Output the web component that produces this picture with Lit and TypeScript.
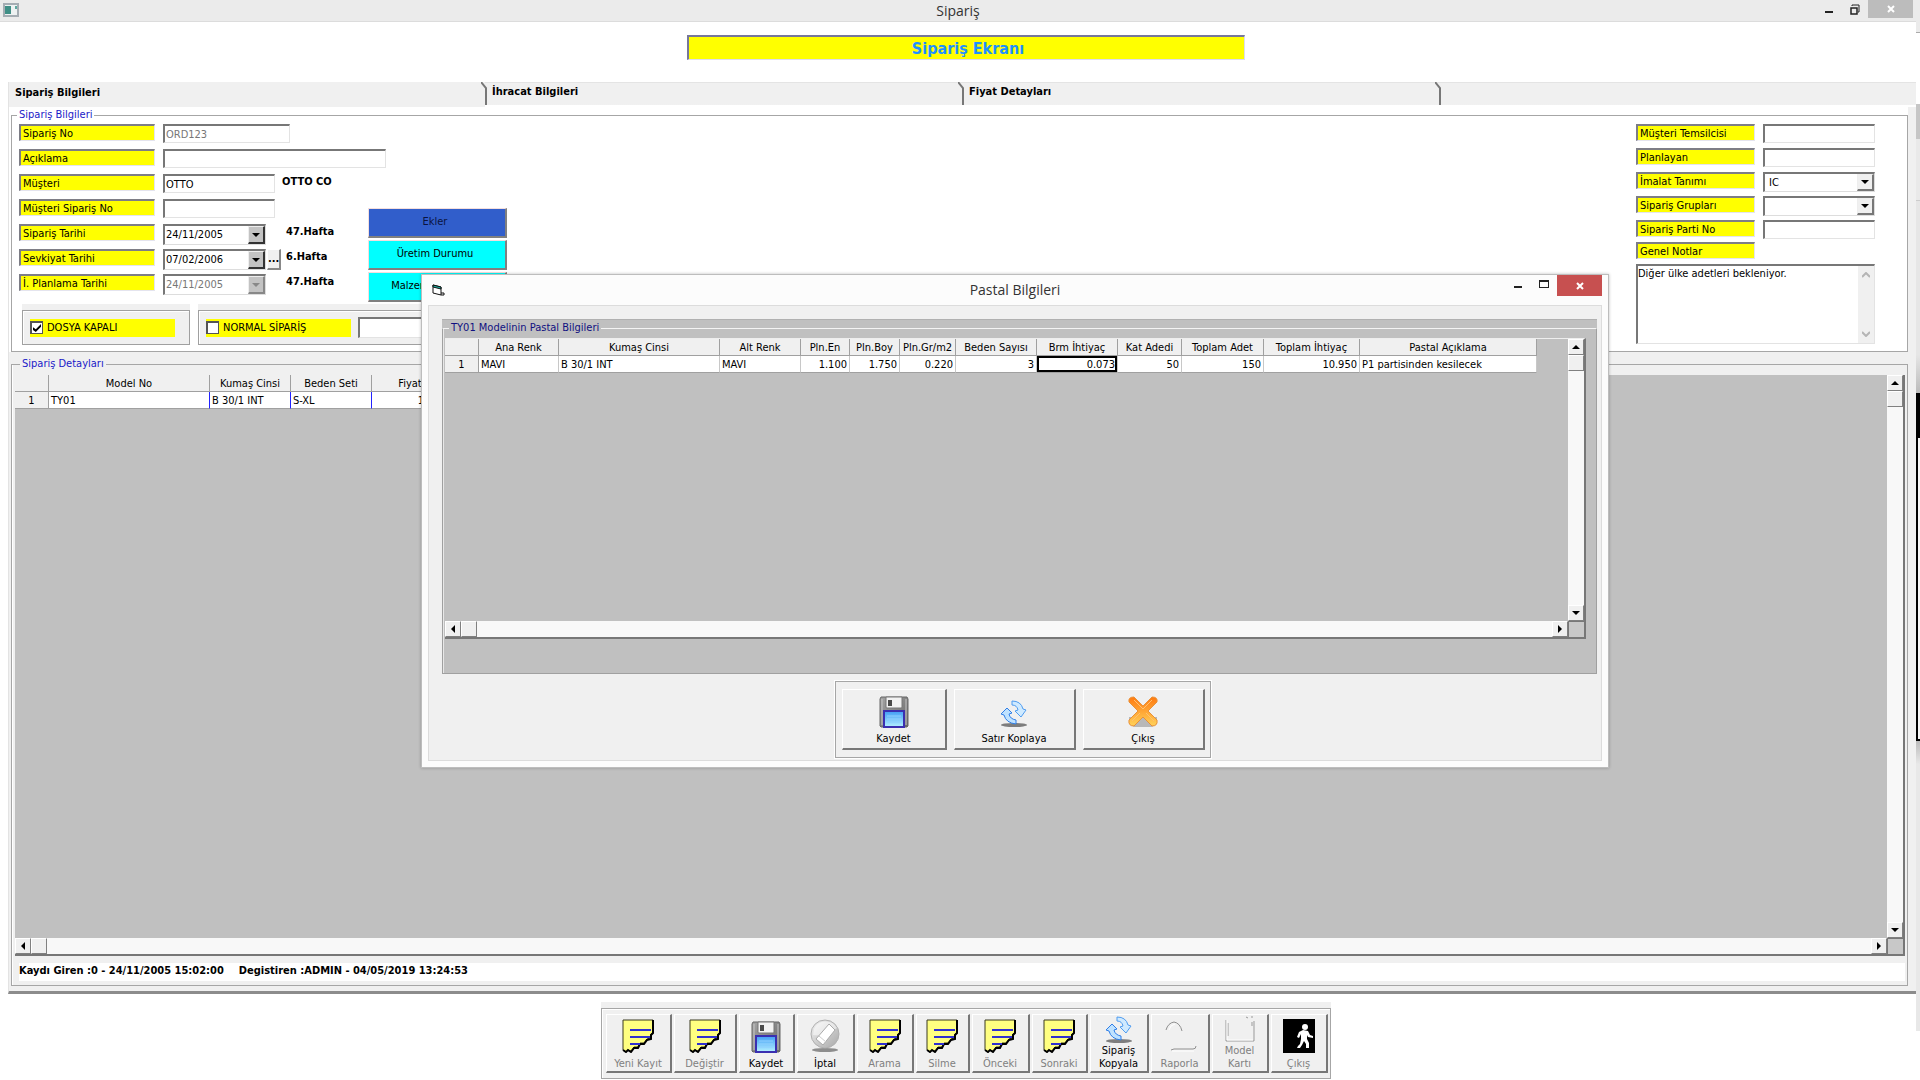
import { LitElement, html, svg, css, nothing } from "lit";
import { customElement } from "lit/decorators.js";
import { classMap } from "lit/directives/class-map.js";

const noteIcon = svg`<svg width="32" height="34" viewBox="0 0 32 34">
  <path d="M1 1H31V14L29 15L28 19L25 20L22 24L18 24L16 28L12 28L9 32L6 31L4 33L1 31Z" fill="#ffff80" stroke="#3a3a20" stroke-width="1"/>
  <path d="M31 1V14L29 16L29 20L25 21L22 25L18 25L16 29L12 29L9 33L6 31L4 33L1 31" fill="none" stroke="#000" stroke-width="2"/>
  <path d="M8 11H29M8 18H28M8 25H18" stroke="#3030d0" stroke-width="2"/></svg>`;

const diskIcon = svg`<svg width="30" height="32" viewBox="0 0 30 32">
  <defs>
    <linearGradient id="dk" x1="0" y1="0" x2="1" y2="1"><stop offset="0" stop-color="#a4a4a4"/><stop offset="1" stop-color="#686868"/></linearGradient>
    <linearGradient id="dl" x1="0" y1="0" x2="0" y2="1"><stop offset="0" stop-color="#3f9cf5"/><stop offset="1" stop-color="#b5f1ff"/></linearGradient>
  </defs>
  <path d="M2 1H28L29 3V30L28 31H2L1 30V3Z" fill="url(#dk)" stroke="#666"/>
  <path d="M3 3V29M27 3V29" stroke="#c5c5c5" stroke-width="1"/>
  <path d="M7 1H23V11Q23 12 22 12H8Q7 12 7 11Z" fill="#f2f2f2" stroke="#777"/>
  <rect x="9" y="4" width="4" height="6" fill="#4a4a4a"/>
  <rect x="5" y="15" width="20" height="16" fill="url(#dl)" stroke="#3a2fb0" stroke-width="2"/>
  <path d="M8 20H22M8 23H22M8 26H22" stroke="#8fd0ff" stroke-width="1"/></svg>`;

const cancelIcon = svg`<svg width="30" height="34" viewBox="0 0 30 34">
  <defs><linearGradient id="cg" x1="0" y1="0" x2="1" y2="1"><stop offset="0" stop-color="#f4f4f4"/><stop offset="1" stop-color="#a8a8a8"/></linearGradient></defs>
  <ellipse cx="15" cy="31" rx="13" ry="2" fill="#8d8d8d"/>
  <circle cx="15" cy="15" r="14" fill="url(#cg)" stroke="#b0b0b0"/>
  <path d="M3 16Q14 18 27 9A13 13 0 0 0 4 10Z" fill="#fff" opacity=".5"/>
  <path d="M19 5L25 11L13 26L6 20Z" fill="#fff" stroke="#aaa"/>
  <path d="M9 17L16 23" stroke="#ccc"/></svg>`;

const copyIcon = svg`<svg width="28" height="28" viewBox="0 0 28 28">
  <ellipse cx="14" cy="25" rx="13" ry="2" fill="#7d7d7d"/>
  <path d="M12 1Q21 1 23 9L26 10L21 17L15 11L18 10Q17 5 12 5Z" fill="#cfeaff" stroke="#4f9cf0"/>
  <path d="M7 8L12 13L9 14Q10 19 16 20V24Q6 23 4 15L1 14Z" fill="#bfe2ff" stroke="#2f7fe8"/></svg>`;

const closeIcon = svg`<svg width="30" height="32" viewBox="0 0 30 32">
  <defs><linearGradient id="xg" x1="0" y1="0" x2="0" y2="1"><stop offset="0" stop-color="#ff7a10"/><stop offset="1" stop-color="#ffd25a"/></linearGradient></defs>
  <path d="M1 21H29V27L24 31H6L1 27Z" fill="#aaa" opacity=".8"/>
  <path d="M6 1L15 10L24 1Q30 1 29 6L20 15L29 24Q30 30 24 30L15 21L6 30Q0 30 1 24L10 15L1 6Q0 1 6 1Z" fill="url(#xg)" stroke="#e8913a"/>
  <path d="M6 4L15 13L24 4M4 25L12 17M26 25L18 17" fill="none" stroke="#ffc070" stroke-width="1"/></svg>`;

const reportIcon = svg`<svg width="34" height="34" viewBox="0 0 34 34" fill="none">
  <path d="M3 11Q5 4 11 3Q17 4 19 12" stroke="#8f8f8f"/><path d="M6 11Q7 6 12 5" stroke="#fff"/>
  <path d="M8 31L11 30H30Q33 30 33 27" stroke="#8f8f8f"/><path d="M9 32H31" stroke="#fff"/></svg>`;

const cardIcon = svg`<svg width="32" height="28" viewBox="0 0 32 28" fill="none">
  <path d="M2 4V25H30V5M4 7V20M28 6V10M22 1L24 2M27 1H29" stroke="#999"/><path d="M3 24H29M3 4V24" stroke="#fff"/></svg>`;

const exitIcon = svg`<svg width="32" height="34" viewBox="0 0 32 34">
  <rect width="32" height="34" fill="#000"/>
  <circle cx="22" cy="8" r="3" fill="#fff"/>
  <path d="M20 11L25 12L27 16L30 17V19L25 18L24 16V20L26 24V29L23 29L23 25L21 22L19 26L17 29L14 29L15 27L17 25L18 20V15L16 19L14 18L16 13Z" fill="#fff"/></svg>`;

const tri = {
  up: svg`<svg width="8" height="4" viewBox="0 0 8 4"><path d="M0 4L4 0L8 4Z"/></svg>`,
  down: svg`<svg width="8" height="4" viewBox="0 0 8 4"><path d="M0 0H8L4 4Z"/></svg>`,
  left: svg`<svg width="4" height="8" viewBox="0 0 4 8"><path d="M4 0V8L0 4Z"/></svg>`,
  right: svg`<svg width="4" height="8" viewBox="0 0 4 8"><path d="M0 0V8L4 4Z"/></svg>`,
};

const tabEdge = html`<svg class="tab-edge" width="7" height="24" viewBox="0 0 7 24"><path d="M0 0L5 6V23" fill="none" stroke="#777" stroke-width="2"/></svg>`;
const minGlyph = html`<svg width="8" height="10" viewBox="0 0 8 10"><path d="M0 8H8" stroke="#222" stroke-width="2"/></svg>`;
const crossGlyph = html`<svg width="8" height="8" viewBox="0 0 8 8"><path d="M1 1L7 7M7 1L1 7" stroke="#fff" stroke-width="2"/></svg>`;

interface GridColumn { title: string; value: string; num?: boolean; active?: boolean }
const planColumns: GridColumn[] = [
  { title: "Ana Renk", value: "MAVI" },
  { title: "Kumaş Cinsi", value: "B 30/1 INT" },
  { title: "Alt Renk", value: "MAVI" },
  { title: "Pln.En", value: "1.100", num: true },
  { title: "Pln.Boy", value: "1.750", num: true },
  { title: "Pln.Gr/m2", value: "0.220", num: true },
  { title: "Beden Sayısı", value: "3", num: true },
  { title: "Brm İhtiyaç", value: "0.073", num: true, active: true },
  { title: "Kat Adedi", value: "50", num: true },
  { title: "Toplam Adet", value: "150", num: true },
  { title: "Toplam İhtiyaç", value: "10.950", num: true },
  { title: "Pastal Açıklama", value: "P1 partisinden kesilecek" },
];
const planWidths = [34, 80, 161, 81, 49, 50, 56, 81, 81, 64, 82, 96, 177];

const orderColumns: GridColumn[] = [
  { title: "Model No", value: "TY01" },
  { title: "Kumaş Cinsi", value: "B 30/1 INT" },
  { title: "Beden Seti", value: "S-XL" },
  { title: "Fiyat", value: "1.000", num: true },
];
const orderWidths = [34, 161, 81, 81, 77];

const tools = [
  { text: "Yeni Kayıt", icon: noteIcon, off: true },
  { text: "Değiştir", icon: noteIcon, off: true },
  { text: "Kaydet", icon: diskIcon },
  { text: "İptal", icon: cancelIcon },
  { text: "Arama", icon: noteIcon, off: true },
  { text: "Silme", icon: noteIcon, off: true },
  { text: "Önceki", icon: noteIcon, off: true },
  { text: "Sonraki", icon: noteIcon, off: true },
  { text: "Sipariş Kopyala", icon: copyIcon },
  { text: "Raporla", icon: reportIcon, off: true },
  { text: "Model Kartı", icon: cardIcon, off: true },
  { text: "Çıkış", icon: exitIcon, off: true },
];

@customElement("app-root")
export class AppRoot extends LitElement {
  static styles = css`
    :host {
      display: block;
      font: 11px/14px "DejaVu Sans Condensed", "Noto Sans", sans-serif;
      color: #000;
    }
    * { box-sizing: border-box; }
    button, input, select, textarea { font: inherit; color: inherit; margin: 0; border-radius: 0; }
    svg { display: block; flex: none; }
    .screen { position: relative; display: flex; min-height: 100vh; background: #fff; }
    .main { flex: 1; min-width: 0; display: flex; flex-direction: column; }

    .titlebar { display: grid; grid-template-columns: 1fr auto 1fr; height: 22px; background: #ebebeb; border-bottom: 1px solid #dcdcdc; }
    .titlebar h1, .dlg-bar h2 { margin: 0; font: 14px/21px "Open Sans", "Noto Sans", sans-serif; color: #333; }
    .app-icon { margin: 3px 0 0 3px; }
    .win-buttons { display: flex; justify-content: flex-end; align-items: flex-start; }
    .win-buttons button { width: 26px; height: 18px; padding: 0; border: 0; background: none; display: flex; align-items: center; justify-content: center; }
    .win-buttons .close { width: 45px; background: #bcbcbc; }
    .main .close { margin-right: 3px; }

    .banner-row { display: flex; justify-content: center; padding: 13px 0 22px 16px; }
    .banner { width: 558px; height: 25px; padding-left: 3px; background: #ff0; border: 1px solid #dde; border-top: 2px solid #77779a; border-left: 2px solid #77779a; text-align: center; font-size: 16px; line-height: 24px; font-weight: bold; color: #1e90ff; }

    .tabs { display: flex; margin-left: 8px; height: 25px; background: linear-gradient(#e4e4e4 1px, #f0f0f0 1px, #f0f0f0 22px, #e2e2e2 22px, #fff 23px); }
    .tab { flex: 0 0 25%; display: flex; justify-content: space-between; padding: 0 0 0 7px; border: 0; background: none; font-weight: bold; text-align: left; line-height: 20px; }
    .tab.on { background: #f0f0f0; line-height: 22px; border-left: 1px solid #e3e3e3; padding-left: 6px; }
    .tab-edge { margin-right: -3px; }

    .panel { flex: 1; display: flex; flex-direction: column; margin-left: 8px; padding: 0 8px 5px 0; border-left: 1px solid #e3e3e3; border-bottom: 3px solid #8c8c8c; background: #f0f0f0; }
    .white { background: #fff; padding: 1px 0 0 2px; }
    fieldset { margin: 0; padding: 0; border: 1px solid #a6a6a6; min-width: 0; box-shadow: inset 1px 0 #fff; }
    legend { margin-left: 5px; padding: 0 2px; line-height: 14px; color: #1a1ac8; }
    .top-form { display: flex; justify-content: space-between; padding: 2px 32px 6px 7px; }
    .left-form { display: grid; grid-template-columns: 136px 119px 92px 141px; grid-template-rows: repeat(7, 25px); align-items: start; }
    .field { display: flex; align-items: flex-start; grid-column: 2; margin-left: 8px; }
    .wide { grid-column: 2 / 4; }
    .note { grid-column: 3; font-weight: bold; line-height: 15px; padding-left: 8px; }
    .note.far { padding-left: 12px; }
    .tag { display: block; height: 17px; line-height: 15px; padding-left: 2px; background: #ff0; border: 1px solid #e4e4ee; border-top: 2px solid #7d7d86; border-left: 2px solid #7d7d86; grid-column: 1; white-space: nowrap; }
    .box { display: block; flex: none; height: 19px; padding: 1px 1px 0; background: #fff; border: 1px solid #e3e3e3; border-top: 2px solid #777; border-left: 2px solid #777; outline: 0; }
    .w1 { width: 127px; } .w2 { width: 223px; } .w3 { width: 112px; }
    .box:disabled, .combo input:disabled { color: #777; background: #fff; -webkit-text-fill-color: #777; }
    .combo { display: flex; height: 21px; background: #fff; border: 1px solid #ddd; border-top: 2px solid #777; border-left: 2px solid #777; }
    .combo.date { width: 103px; }
    .combo input, .combo select { flex: 1; min-width: 0; border: 0; padding: 0 1px; background: none; outline: 0; appearance: none; }
    .combo select { padding-left: 4px; width: 100%; }
    .drop { flex: none; width: 17px; padding: 0; display: flex; align-items: center; justify-content: center; background: #c3c3c3; border: 1px solid #eee; border-right: 2px solid #333; border-bottom: 2px solid #333; }
    .drop.soft { background: #f0f0f0; border-right-color: #777; border-bottom-color: #777; }
    .drop:disabled { border-right-color: #888; border-bottom-color: #888; fill: #888; }
    .dots { width: 17px; height: 21px; margin-left: 1px; padding: 0; background: #f0f0f0; border: 1px solid #fff; border-right: 2px solid #888; border-bottom: 2px solid #888; font-weight: bold; }
    .side-buttons { grid-column: 4; grid-row: 4 / 8; display: grid; gap: 2px; padding: 9px 0 0 2px; }
    .side-buttons button { width: 139px; height: 30px; padding: 0 4px 2px 0; background: #0ff; border: 1px solid #f3dede; border-right: 2px solid #808080; border-bottom: 2px solid #808080; }
    .side-buttons .blue { background: #315ecb; color: #0b1440; }
    .flags { display: flex; gap: 8px; padding: 5px 0 0 3px; }
    .flag-wrap { width: 168px; padding-top: 6px; background: #f0f0f0; }
    .flag-wrap.long { width: 420px; }
    .flag { display: flex; align-items: center; height: 35px; padding-left: 7px; border: 1px solid #a0a0a0; box-shadow: inset 1px 1px #fff; }
    .check { display: flex; align-items: center; width: 145px; height: 18px; background: #ff0; gap: 4px; }
    .check input { appearance: none; width: 13px; height: 13px; margin: 0; background: #fff; border: 1px solid #555; border-top-width: 2px; border-left-width: 2px; display: grid; place-items: center; }
    .check input:checked::before { content: ""; width: 8px; height: 8px; background: #000; clip-path: polygon(0 40%, 35% 65%, 100% 0, 100% 35%, 35% 100%, 0 75%); }
    .flag .box { width: 200px; height: 21px; margin-left: 7px; }

    .right-form { display: grid; grid-template-columns: 119px 112px; column-gap: 8px; grid-template-rows: repeat(4, 24px) 22px 22px; align-items: start; align-content: start; }
    .right-form .combo { width: 112px; height: 20px; }
    .notes { grid-column: 1 / 3; display: flex; height: 80px; background: #fff; border: 1px solid #e3e3e3; border-top: 2px solid #777; border-left: 2px solid #777; }
    .notes textarea { flex: 1; min-width: 0; border: 0; padding: 1px 0; resize: none; outline: 0; overflow: hidden; }
    .notes-scroll { width: 16px; display: flex; flex-direction: column; justify-content: space-between; align-items: center; padding: 6px 0; background: #f0f0f0; }

    .details { flex: 1; display: flex; flex-direction: column; margin: 5px 0 0 2px; padding: 4px 2px 4px 3px; }
    .sheet { display: grid; grid-template-columns: minmax(0, 1fr) 16px; grid-template-rows: 1fr 16px; background: #c0c0c0; border-right: 2px solid #777; border-bottom: 2px solid #777; overflow: hidden; }
    .details .sheet { flex: 1; }
    .sheet-body { overflow: hidden; }
    table { table-layout: fixed; width: 0; border-collapse: separate; border-spacing: 0; line-height: 14px; }
    th, td { height: 17px; padding: 1px 2px 0; border: 0 solid #a0a0a0; border-right-width: 1px; border-bottom-width: 1px; font-weight: normal; white-space: nowrap; overflow: hidden; }
    th { background: #f0f0f0; text-align: center; }
    td { background: #fff; border-right-color: #c8c8c8; }
    td.num { text-align: right; }
    .order td { border-right-color: #22f; }
    td.active { box-shadow: inset 0 0 0 2px #000; }
    .vbar { display: flex; flex-direction: column; background: #f8f8f8; }
    .hbar { display: flex; background: #f8f8f8; }
    .corner { background: #c8c8c8; border-left: 1px solid #777; border-top: 1px solid #777; }
    .sb { flex: none; width: 16px; height: 16px; padding: 0; display: flex; align-items: center; justify-content: center; background: #f0f0f0; border: 1px solid #fff; border-right-color: #808080; border-bottom-color: #808080; }
    .push { flex: 1; }
    .status { display: flex; gap: 15px; margin: 7px 0 0 4px; height: 18px; line-height: 16px; background: #fff; font-weight: bold; }

    .tool-row { display: flex; justify-content: center; padding: 8px 0 1px 15px; }
    .tool-wrap { background: #f0f0f0; padding-top: 6px; }
    .tools { display: grid; grid-template-columns: 66px 63px 56px 58px 57px 54px 58px 56px 59px 59px 57px 57px; gap: 2px; padding: 5px 2px 5px 4px; border: 1px solid #a6a6a6; box-shadow: inset 1px 1px #fff; }
    .tool { height: 59px; padding: 0 0 1px; display: flex; flex-direction: column; align-items: center; justify-content: flex-end; background: #f0f0f0; border: 1px solid #fff; border-right: 2px solid #777; border-bottom: 2px solid #777; line-height: 13px; gap: 4px; }
    .tool:disabled { color: #808080; }
    .tool.two { gap: 0; }

    .fringe { width: 4px; flex: none; display: flex; flex-direction: column; background: #e9e9e9; }
    .f1 { height: 33px; background: #ebebeb; border-bottom: 1px solid #aaa; }
    .f2 { height: 71px; background: #fff; }
    .f3 { height: 35px; background: #c6c6c6; }
    .f4 { height: 62px; background: #e9e9e9; border-bottom: 1px solid #ccc; }
    .f5 { height: 192px; background: linear-gradient(#e6e6e6 80%, #bbb); }
    .f6 { height: 45px; background: #000; }
    .f7 { height: 303px; background: #f5f5f5; border: solid #000; border-width: 0 0 2px 2px; }
    .f8 { height: 290px; background: linear-gradient(#bbb, #e8e8e8 8%); }
    .f9 { flex: 1; background: #fff; }

    .dialog { position: absolute; left: 421px; right: 311px; top: 274px; padding: 0 6px 6px; background: #fcfcfc; border: 1px solid #bdbdbd; box-shadow: 0 0 3px rgba(0, 0, 0, .25); }
    .dlg-bar { display: grid; grid-template-columns: 1fr auto 1fr; height: 30px; }
    .dlg-bar h2 { line-height: 30px; }
    .dlg-bar .close { height: 21px; background: #c75050; }
    .dlg-icon { margin: 8px 0 0 4px; }
    .client { padding: 13px 4px 2px 13px; background: #f0f0f0; border: 1px solid #dcdcdc; display: flex; flex-direction: column; align-items: center; }
    .plan { align-self: stretch; padding-top: 1px; background: #c0c0c0; border-top: 1px solid #b0b0b0; }
    .plan fieldset { border-color: #a0a0a0; border-top-color: #f4f4f4; padding: 3px 10px 34px 2px; box-shadow: inset 1px 0 #e8e8e8; }
    .plan legend { color: #101080; margin-left: 4px; background: #c0c0c0; }
    .plan .sheet { min-height: 301px; border-top: 1px solid #eee; }
    .dlg-tools { display: grid; grid-template-columns: 105px 122px 122px; gap: 7px; margin: 7px 0 0 6px; padding: 7px 5px 7px 6px; border: 1px solid #a6a6a6; outline: 1px solid #fff; }
    .dlg-tools .tool { height: 61px; line-height: 14px; padding-bottom: 2px; }
  `;

  private tool(t: { text: string; icon: unknown; off?: boolean }) {
    const parts = t.text.split(" ");
    const two = t.text === "Sipariş Kopyala" || t.text === "Model Kartı";
    return html`<button class=${classMap({ tool: true, two })} ?disabled=${t.off ?? false}>
      ${t.icon}<span>${two ? html`${parts[0]}<br />${parts[1]}` : t.text}</span>
    </button>`;
  }

  private sheet(cols: GridColumn[], widths: number[], kind: string) {
    return html`<div class="sheet">
      <div class="sheet-body">
        <table class=${kind}>
          <colgroup>${widths.map((w) => html`<col style="width:${w}px" />`)}</colgroup>
          <thead><tr><th></th>${cols.map((c) => html`<th scope="col">${c.title}</th>`)}</tr></thead>
          <tbody><tr><th scope="row">1</th>${cols.map((c) => html`<td class=${classMap({ num: !!c.num, active: !!c.active })}>${c.value}</td>`)}</tr></tbody>
        </table>
      </div>
      <div class="vbar">
        <button class="sb" aria-label="Yukarı">${tri.up}</button><span class="sb"></span><span class="push"></span>
        <button class="sb" aria-label="Aşağı">${tri.down}</button>
      </div>
      <div class="hbar">
        <button class="sb" aria-label="Sola">${tri.left}</button><span class="sb"></span><span class="push"></span>
        <button class="sb" aria-label="Sağa">${tri.right}</button>
      </div>
      <div class="corner"></div>
    </div>`;
  }

  private text(id: string, label: string, size: string, value = "", off = false) {
    return html`<label class="tag" for=${id}>${label}</label>
      <div class=${classMap({ field: true, wide: size === "w2" })}><input class="box ${size}" id=${id} .value=${value} ?disabled=${off} /></div>`;
  }

  private date(id: string, label: string, value: string, week: string, off = false, dots = false) {
    return html`<label class="tag" for=${id}>${label}</label>
      <div class="field">
        <div class="combo date"><input id=${id} .value=${value} ?disabled=${off} /><button class="drop" aria-label="Takvim" ?disabled=${off}>${tri.down}</button></div>
        ${dots ? html`<button class="dots">...</button>` : nothing}
      </div>
      <span class="note far">${week}</span>`;
  }

  private choice(id: string, label: string, value: string) {
    return html`<label class="tag" for=${id}>${label}</label>
      <div class="combo"><select id=${id}><option>${value}</option></select><span class="drop soft">${tri.down}</span></div>`;
  }

  render() {
    return html`<div class="screen">
      <div class="main">
        <header class="titlebar">
          <svg class="app-icon" width="16" height="14" viewBox="0 0 16 14"><rect x="1" y="1" width="14" height="12" fill="#eef2f2" stroke="#a5adb3" stroke-width="2"/><rect x="2" y="3" width="6" height="8" fill="#3f8f86"/><rect x="12" y="3" width="2" height="3" fill="#5fa8a0"/></svg>
          <h1>Sipariş</h1>
          <div class="win-buttons">
            <button aria-label="Küçült">${minGlyph}</button>
            <button aria-label="Geri yükle"><svg width="10" height="11" viewBox="0 0 10 11" fill="none" stroke="#222"><path d="M2 2V1H9V8H8"/><rect x="1" y="4" width="6" height="6" stroke-width="1.5"/></svg></button>
            <button class="close" aria-label="Kapat">${crossGlyph}</button>
          </div>
        </header>

        <div class="banner-row"><div class="banner">Sipariş Ekranı</div></div>

        <nav class="tabs">
          <button class="tab on">Sipariş Bilgileri${tabEdge}</button>
          <button class="tab">İhracat Bilgileri${tabEdge}</button>
          <button class="tab">Fiyat Detayları${tabEdge}</button>
        </nav>

        <main class="panel">
          <div class="white">
            <fieldset>
              <legend>Sipariş Bilgileri</legend>
              <div class="top-form">
                <div>
                  <div class="left-form">
                    ${this.text("no", "Sipariş No", "w1", "ORD123", true)}
                    ${this.text("ack", "Açıklama", "w2")}
                    ${this.text("mus", "Müşteri", "w3", "OTTO")}<span class="note">OTTO CO</span>
                    ${this.text("mno", "Müşteri Sipariş No", "w3")}
                    ${this.date("st", "Sipariş Tarihi", "24/11/2005", "47.Hafta")}
                    ${this.date("sv", "Sevkiyat Tarihi", "07/02/2006", "6.Hafta", false, true)}
                    ${this.date("pt", "İ. Planlama Tarihi", "24/11/2005", "47.Hafta", true)}
                    <div class="side-buttons">
                      <button class="blue">Ekler</button>
                      <button>Üretim Durumu</button>
                      <button>Malzeme Durumu</button>
                    </div>
                  </div>
                  <div class="flags">
                    <div class="flag-wrap"><div class="flag"><label class="check"><input type="checkbox" checked />DOSYA KAPALI</label></div></div>
                    <div class="flag-wrap long"><div class="flag"><label class="check"><input type="checkbox" />NORMAL SİPARİŞ</label><input class="box" aria-label="Sipariş türü" /></div></div>
                  </div>
                </div>
                <div class="right-form">
                  <label class="tag" for="mt">Müşteri Temsilcisi</label><input class="box w3" id="mt" />
                  <label class="tag" for="pl">Planlayan</label><input class="box w3" id="pl" />
                  ${this.choice("im", "İmalat Tanımı", "IC")}
                  ${this.choice("sg", "Sipariş Grupları", "")}
                  <label class="tag" for="sp">Sipariş Parti No</label><input class="box w3" id="sp" />
                  <label class="tag" for="gn">Genel Notlar</label><span></span>
                  <div class="notes">
                    <textarea id="gn" .value=${"Diğer ülke adetleri bekleniyor."}></textarea>
                    <div class="notes-scroll">
                      <svg width="8" height="6" viewBox="0 0 8 6"><path d="M0 5L4 1L8 5" fill="none" stroke="#b5b5b5" stroke-width="2"/></svg>
                      <svg width="8" height="6" viewBox="0 0 8 6"><path d="M0 1L4 5L8 1" fill="none" stroke="#b5b5b5" stroke-width="2"/></svg>
                    </div>
                  </div>
                </div>
              </div>
            </fieldset>
          </div>
          <fieldset class="details">
            <legend>Sipariş Detayları</legend>
            ${this.sheet(orderColumns, orderWidths, "order")}
            <div class="status"><span>Kaydı Giren :0 - 24/11/2005 15:02:00</span><span>Degistiren :ADMIN - 04/05/2019 13:24:53</span></div>
          </fieldset>
        </main>

        <footer class="tool-row"><div class="tool-wrap"><div class="tools">${tools.map((t) => this.tool(t))}</div></div></footer>
      </div>

      <div class="fringe"><i class="f1"></i><i class="f2"></i><i class="f3"></i><i class="f4"></i><i class="f5"></i><i class="f6"></i><i class="f7"></i><i class="f8"></i><i class="f9"></i></div>

      <section class="dialog" role="dialog" aria-labelledby="dt">
        <header class="dlg-bar">
          <svg class="dlg-icon" width="13" height="14" viewBox="0 0 13 14"><path d="M1 2L9 4V12L1 10Z" fill="#fff" stroke="#111"/><path d="M1 2L9 4V6L1 4Z" fill="#1fb5a8" stroke="#111"/><path d="M9 10H12V12H9" fill="none" stroke="#111"/></svg>
          <h2 id="dt">Pastal Bilgileri</h2>
          <div class="win-buttons">
            <button aria-label="Küçült"><svg width="8" height="10" viewBox="0 0 8 10"><path d="M0 8H8" stroke="#222" stroke-width="2"/></svg></button>
            <button aria-label="Büyüt"><svg width="10" height="8" viewBox="0 0 10 8"><path d="M0 1H10M0 7.5H10M.5 0V8M9.5 0V8" stroke="#222" stroke-width="1"/><path d="M0 1H10" stroke="#222" stroke-width="2"/></svg></button>
            <button class="close" aria-label="Pencereyi kapat">${crossGlyph}</button>
          </div>
        </header>
        <div class="client">
          <div class="plan">
            <fieldset>
              <legend>TY01 Modelinin Pastal Bilgileri</legend>
              ${this.sheet(planColumns, planWidths, "plan-table")}
            </fieldset>
          </div>
          <div class="dlg-tools">
            ${this.tool({ text: "Kaydet", icon: diskIcon })}
            ${this.tool({ text: "Satır Koplaya", icon: copyIcon })}
            ${this.tool({ text: "Çıkış", icon: closeIcon })}
          </div>
        </div>
      </section>
    </div>`;
  }
}
